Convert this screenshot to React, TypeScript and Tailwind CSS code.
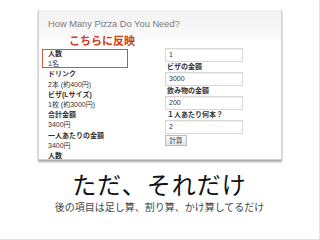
import React from "react";

const jp = { fontFamily: '"Liberation Sans", "Noto Sans CJK JP", sans-serif' };

function Field({ value }: { value: string }) {
  return (
    <div className="w-[78px] h-[14px] border border-[#d6d6d6] bg-white shadow-[inset_0_1px_1px_rgba(0,0,0,0.06)] pl-[3px] text-[7px] leading-[12px] text-[#333]">
      {value}
    </div>
  );
}

function Label({ text }: { text: string }) {
  return <div className="h-[10px] pl-[2px] text-[7px] leading-[10px] font-bold text-[#333]">{text}</div>;
}

export default function App() {
  const left: [string, boolean][] = [
    ["人数", true],
    ["1名", false],
    ["ドリンク", true],
    ["2本 (約400円)", false],
    ["ビザ(Lサイズ)", true],
    ["1枚 (約3000円)", false],
    ["合計金額", true],
    ["3400円", false],
    ["一人あたりの金額", true],
    ["3400円", false],
    ["人数", true],
  ];
  return (
    <div className="w-[320px] h-[240px] bg-white relative overflow-hidden border-r border-b border-[#e2e2e2]" style={jp}>
      <div className="pt-[10px] pl-[38px]">
        <div className="w-[244px] h-[150px] bg-white border-l border-r border-b border-[#d2d2d2] shadow-[0_2px_2px_rgba(0,0,0,0.35)]">
          <div className="h-[30px] bg-gradient-to-b from-[#f2f2f2] to-[#fbfbfb] flex items-center pl-[9px] text-[9.3px] text-[#7a7a7a]">
            How Many Pizza Do You Need?
          </div>
          <div className="flex">
            <div className="w-[126px] pl-[9px] pt-[9px]">
              {left.map(([t, b], i) => (
                <div key={i} className={`h-[10.2px] text-[7px] leading-[10px] text-[#333] ${b ? "font-bold" : "font-normal"}`}>
                  {t}
                </div>
              ))}
            </div>
            <div className="pt-[8px] flex flex-col">
              <Field value="1" />
              <Label text="ビザの金額" />
              <Field value="3000" />
              <Label text="飲み物の金額" />
              <Field value="200" />
              <Label text="１人あたり何本？" />
              <Field value="2" />
              <div className="mt-[1px] w-[22px] h-[11px] border border-[#bdbdbd] bg-gradient-to-b from-[#fafafa] to-[#e6e6e6] text-[6.5px] leading-[9px] text-center text-[#444]">
                計算
              </div>
            </div>
          </div>
        </div>
      </div>
      <div className="absolute left-[69px] top-[35px] text-[11px] leading-[12px] font-bold text-[#d23a22]">こちらに反映</div>
      <div className="absolute left-[42px] top-[49px] w-[86px] h-[19px] border border-[#d4533e]" />
      <div className="mt-[12px] text-center text-[24px] leading-[28px] text-[#111] tracking-[1px]">ただ、それだけ</div>
      <div className="mt-[2px] text-center text-[10px] leading-[12px] text-[#444]">後の項目は足し算、割り算、かけ算してるだけ</div>
    </div>
  );
}
